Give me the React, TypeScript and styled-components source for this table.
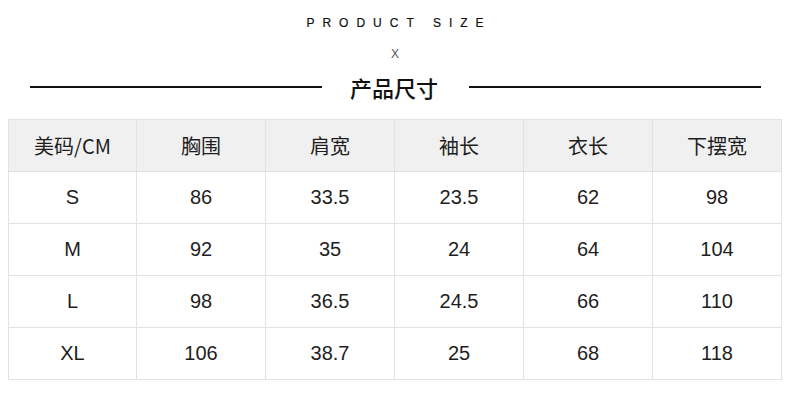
import React from "react";
import styled, { createGlobalStyle } from "styled-components";

const GlobalStyle = createGlobalStyle`
  html, body {
    margin: 0;
    padding: 0;
    background: #ffffff;
  }
  body {
    font-family: "Liberation Sans", "Noto Sans CJK SC", sans-serif;
    color: #1e1e1e;
  }
`;

const headers = ["美码/CM", "胸围", "肩宽", "袖长", "衣长", "下摆宽"];

const rows = [
  ["S", "86", "33.5", "23.5", "62", "98"],
  ["M", "92", "35", "24", "64", "104"],
  ["L", "98", "36.5", "24.5", "66", "110"],
  ["XL", "106", "38.7", "25", "68", "118"],
];

export default function App() {
  return (
    <>
      <GlobalStyle />
      <Page>
        <Heading>
          <Eyebrow>PRODUCT SIZE</Eyebrow>
          <Cross>X</Cross>
          <TitleRow>
            <Rule />
            <Title>产品尺寸</Title>
            <Rule />
          </TitleRow>
        </Heading>
        <Table>
          {headers.map((h, i) => (
            <Cell key={h} $head $first={i === 0}>
              {h}
            </Cell>
          ))}
          {rows.map((row) =>
            row.map((v, i) => (
              <Cell key={row[0] + i} $first={i === 0}>
                {v}
              </Cell>
            ))
          )}
        </Table>
      </Page>
    </>
  );
}

const Page = styled.div`
  width: 790px;
  height: 419px;
  display: flex;
  flex-direction: column;
`;

const Heading = styled.div`
  display: flex;
  flex-direction: column;
  align-items: center;
  padding-top: 16px;
`;

const Eyebrow = styled.div`
  font-family: "Liberation Sans", sans-serif;
  font-size: 12px;
  line-height: 14px;
  letter-spacing: 8px;
  margin-right: -8px;
  color: #111;
  -webkit-text-stroke: 0.2px #111;
`;

const Cross = styled.div`
  font-family: "Liberation Sans", sans-serif;
  font-size: 12px;
  line-height: 14px;
  margin-top: 17px;
  color: #555;
`;

const TitleRow = styled.div`
  align-self: stretch;
  display: flex;
  align-items: center;
  padding: 0 29px 0 30px;
  margin-top: 11px;
  height: 30px;
`;

const Rule = styled.div`
  flex: 1;
  height: 0;
  border-top: 2px solid #111;
`;

const Title = styled.div`
  font-family: "Noto Sans CJK SC", sans-serif;
  font-size: 22px;
  font-weight: 500;
  line-height: 30px;
  margin: 0 31px 0 28px;
  color: #111;
`;

const Table = styled.div`
  margin: 17px 0 0 8px;
  width: 774px;
  display: grid;
  grid-template-columns: repeat(6, 1fr);
  grid-auto-rows: 52px;
  border-top: 1px solid #e2e2e2;
`;

const Cell = styled.div<{ $head?: boolean; $first?: boolean }>`
  display: flex;
  align-items: center;
  justify-content: center;
  border-right: 1px solid #e2e2e2;
  border-bottom: 1px solid #e2e2e2;
  border-left: ${(p) => (p.$first ? "1px solid #e2e2e2" : "none")};
  background: ${(p) => (p.$head ? "#f0f0f0" : "#ffffff")};
  font-family: ${(p) =>
    p.$head
      ? '"Noto Sans CJK SC", "Liberation Sans", sans-serif'
      : '"Liberation Sans", sans-serif'};
  font-size: 20px;
  color: #1e1e1e;
`;
